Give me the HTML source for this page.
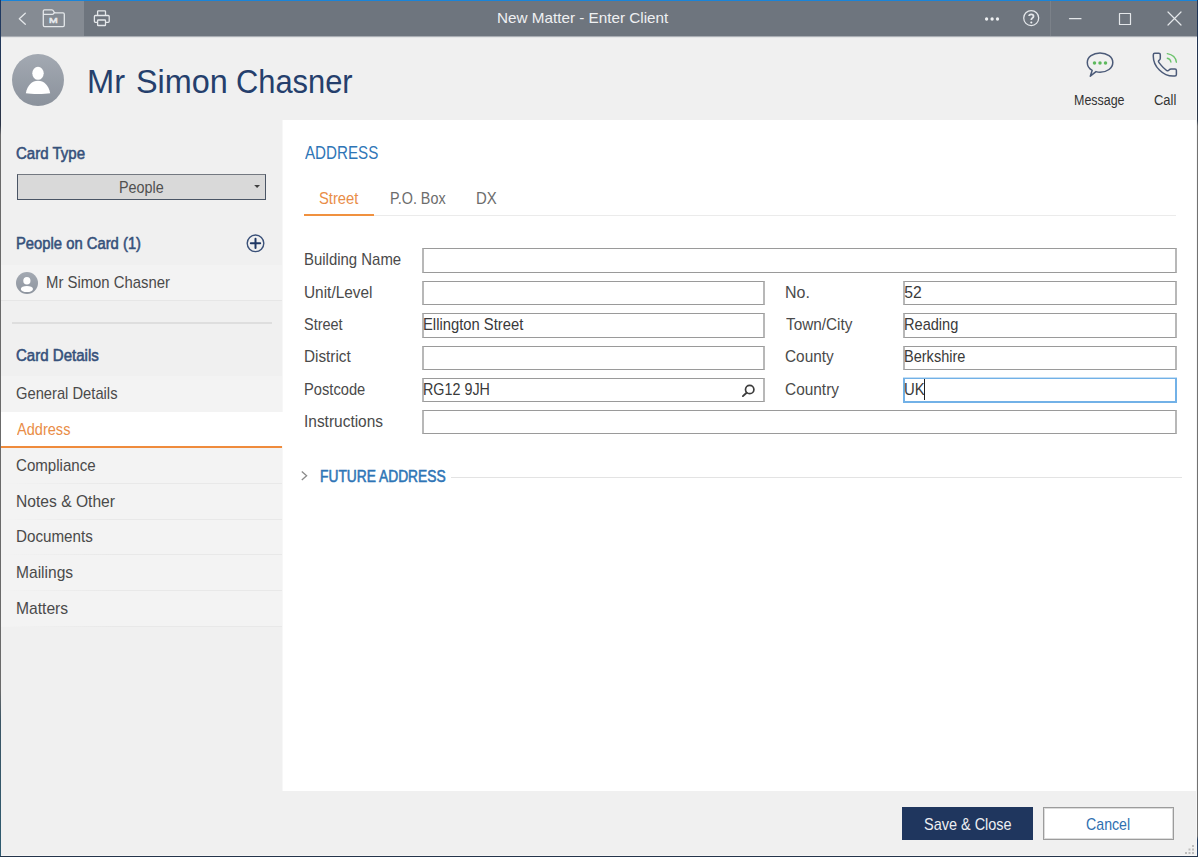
<!DOCTYPE html><html><head><meta charset="utf-8"><style>
html,body{margin:0;padding:0;width:1198px;height:857px;overflow:hidden;background:#f0f0f0}
body{position:relative;font-family:"Liberation Sans",sans-serif}
.t{position:absolute;white-space:nowrap}
.b{position:absolute}
</style></head><body>
<div class="b" style="left:0px;top:0px;width:1198px;height:857px;background:#f0f0f0"></div>
<div class="b" style="left:0px;top:0px;width:1198px;height:36px;background:#6e757e"></div>
<div class="b" style="left:0px;top:1px;width:84px;height:35px;background:#858b93"></div>
<div class="b" style="left:0px;top:36px;width:1198px;height:1px;background:#aaaeb4"></div>
<div class="b" style="left:0px;top:37px;width:1198px;height:1px;background:#e4e5e6"></div>
<div class="b" style="left:0px;top:0px;width:1198px;height:1px;background:#1a84d8"></div>
<div class="b" style="left:1050px;top:1px;width:1px;height:35px;background:#7b8189"></div>
<div class="t" style="left:87.33px;top:65.29px;font-size:33.43px;line-height:33.43px;transform:scaleX(0.9752);transform-origin:0 0;color:#253f6c;font-weight:normal;">Mr</div>
<div class="t" style="left:135.53px;top:65.29px;font-size:33.43px;line-height:33.43px;transform:scaleX(0.9696);transform-origin:0 0;color:#253f6c;font-weight:normal;">Simon</div>
<div class="t" style="left:235.83px;top:65.29px;font-size:33.43px;line-height:33.43px;transform:scaleX(0.9234);transform-origin:0 0;color:#253f6c;font-weight:normal;">Chasner</div>
<svg class="b" style="left:12px;top:54px" width="52" height="52" viewBox="0 0 52 52">
<defs><linearGradient id="ag" x1="0" y1="0" x2="0" y2="1"><stop offset="0" stop-color="#a3a9b2"/><stop offset="1" stop-color="#8b929c"/></linearGradient></defs>
<circle cx="26" cy="26" r="26" fill="url(#ag)"/>
<ellipse cx="26" cy="19.3" rx="5.7" ry="6.5" fill="#fff"/>
<path d="M13.8 39.3 C15.5 31 20 26.8 26 26.8 C32 26.8 36.5 31 38.2 39.3 C33 40.2 19 40.2 13.8 39.3 Z" fill="#fff"/>
</svg>
<div class="t" style="left:496.75px;top:11.22px;font-size:14.97px;line-height:14.97px;transform:scaleX(1.0197);transform-origin:0 0;color:#eef0f2;font-weight:normal;">New Matter - Enter Client</div>
<div class="t" style="left:1074.28px;top:93.04px;font-size:14.24px;line-height:14.24px;transform:scaleX(0.8750);transform-origin:0 0;color:#333333;font-weight:normal;">Message</div>
<div class="t" style="left:1153.64px;top:93.04px;font-size:14.24px;line-height:14.24px;transform:scaleX(0.9098);transform-origin:0 0;color:#333333;font-weight:normal;">Call</div>
<div class="b" style="left:282px;top:120px;width:915px;height:671px;background:#ffffff"></div>
<div class="b" style="left:282px;top:120px;width:1px;height:671px;background:#f7f7f7"></div>
<div class="b" style="left:1197px;top:0px;width:1px;height:857px;background:linear-gradient(180deg,#1d3458 0,#2a3545 120px,#727272 126px,#727272 836px,#1f3a60 840px)"></div>
<div class="b" style="left:0px;top:0px;width:1px;height:857px;background:linear-gradient(180deg,#1e3a64 0,#2b3446 125px,#6a6a6a 135px,#6a6a6a 690px,#3b5565 720px,#2d5a70 857px)"></div>
<div class="b" style="left:0px;top:856px;width:1198px;height:1px;background:#24344a"></div>
<div class="b" style="left:1196px;top:37px;width:1px;height:819px;background:#f6f6f6"></div>
<div class="b" style="left:1px;top:855px;width:1196px;height:1px;background:#f6f6f6"></div>
<svg class="b" style="left:1183px;top:843px" width="14" height="13" viewBox="1183 843 14 13" fill="#bdbdbd">
<rect x="1192" y="845" width="2" height="2"/><rect x="1188.5" y="848.5" width="2" height="2"/><rect x="1192" y="848.5" width="2" height="2"/>
<rect x="1185" y="852" width="2" height="2"/><rect x="1188.5" y="852" width="2" height="2"/><rect x="1192" y="852" width="2" height="2"/></svg>
<svg class="b" style="left:0;top:0" width="1198" height="36" viewBox="0 0 1198 36" fill="none" stroke="#e4e7ea" stroke-width="1.3" stroke-linecap="round" stroke-linejoin="round">
<path d="M25.3 13.3 L19.3 18.8 L25.3 24.3"/>
<path d="M43.3 14.3 V11 Q43.3 9.8 44.5 9.8 H51.8 Q53 9.8 53.8 11.6 Q54.5 12.9 55.8 12.9 H63 Q64.3 12.9 64.3 14.2 V25.3 Q64.3 26.6 63 26.6 H44.6 Q43.3 26.6 43.3 25.3 V14.3 H52.5 Q53.5 14.3 54.2 12.9"/>
<path d="M97.6 15.2 V11.5 Q97.6 10.9 98.2 10.9 H104.9 Q105.5 10.9 105.5 11.5 V15.2"/>
<path d="M97.3 22.3 H95.4 Q94.4 22.3 94.4 21.3 V16.5 Q94.4 15.5 95.4 15.5 H108.2 Q109.2 15.5 109.2 16.5 V21.3 Q109.2 22.3 108.2 22.3 H106"/>
<path d="M97.6 20.6 Q97.6 20 98.2 20 H104.9 Q105.5 20 105.5 20.6 V24.9 Q105.5 25.5 104.9 25.5 H98.2 Q97.6 25.5 97.6 24.9 Z"/>
<circle cx="1031.2" cy="18.1" r="7.5" stroke-width="1.25"/>
<path d="M1029.1 16.1 Q1029.1 14.3 1031.3 14.3 Q1033.5 14.3 1033.5 16.2 Q1033.5 17.3 1032.4 18 Q1031.3 18.7 1031.3 20" stroke-width="1.8" stroke-linecap="butt"/>
<path d="M1069.5 18.7 H1081" stroke-width="1.2"/>
<rect x="1119.5" y="13.5" width="11" height="11" stroke-width="1.2"/>
<path d="M1168 12 L1181 25 M1181 12 L1168 25" stroke-width="1.2"/>
</svg>
<div class="t" style="left:49.44px;top:16.63px;font-size:7.99px;line-height:7.99px;transform:scaleX(1.3089);transform-origin:0 0;color:#e4e7ea;font-weight:normal;-webkit-text-stroke:0.55px #e4e7ea;">M</div>
<svg class="b" style="left:980px;top:14px" width="60" height="10" viewBox="980 14 60 10" fill="#eef0f2">
<circle cx="986.6" cy="19" r="1.65"/><circle cx="992.1" cy="19" r="1.65"/><circle cx="997.5" cy="19" r="1.65"/>
<circle cx="1031.3" cy="22.5" r="1.05"/>
</svg>
<svg class="b" style="left:1080px;top:45px" width="110" height="40" viewBox="1080 45 110 40" fill="none" stroke="#4b5a78" stroke-width="1.5" stroke-linejoin="round" stroke-linecap="round">
<path d="M1092.2 70.3 C1088.7 68.6 1087.3 65.8 1087.3 62.6 C1087.3 57 1093 53 1100 53 C1107 53 1112.8 57 1112.8 62.6 C1112.8 68.2 1107 72.2 1100 72.2 C1098.8 72.2 1097.3 72 1096 71.6 L1090.3 76.2 Z"/>
<g fill="#5cb85c" stroke="none"><circle cx="1094.5" cy="63.1" r="1.75"/><circle cx="1100" cy="63.1" r="1.75"/><circle cx="1105.5" cy="63.1" r="1.75"/></g>
<path d="M1154.8 53.3 H1158.8 Q1160.3 53.3 1160.3 54.8 V58.2 Q1160.3 59.6 1159 60.4 Q1157.9 61.2 1159 62.6 Q1163.5 68.3 1166.5 70.3 Q1168 71.2 1169 70.1 Q1169.8 69 1171.2 69 H1175 Q1176.4 69 1176.4 70.4 V74.6 Q1176.4 76.1 1174.9 76.1 H1173 C1163 76.1 1153.3 66.4 1153.3 56.4 V54.8 Q1153.3 53.3 1154.8 53.3 Z"/>
<g stroke="#6cc36c" stroke-width="1.4"><path d="M1167.3 53.6 Q1175.6 55 1176.4 62.2"/><path d="M1167.3 58.2 Q1170.4 58.8 1170.9 62"/></g>
</svg>
<div class="t" style="left:15.54px;top:146.31px;font-size:15.70px;line-height:15.70px;transform:scaleX(0.9584);transform-origin:0 0;color:#36517b;font-weight:normal;-webkit-text-stroke:0.55px #36517b;">Card Type</div>
<div class="b" style="left:17px;top:174px;width:249px;height:26px;box-sizing:border-box;background:#d9d9d9;border:1px solid #4a5565;border-top-color:#737880"></div>
<div class="t" style="left:119.22px;top:180.31px;font-size:15.70px;line-height:15.70px;transform:scaleX(0.9148);transform-origin:0 0;color:#505050;font-weight:normal;">People</div>
<svg class="b" style="left:250px;top:180px" width="14" height="12"><path d="M4.2 5 H10 L7.1 8.1 Z" fill="#404040"/></svg>
<div class="t" style="left:15.79px;top:236.31px;font-size:15.70px;line-height:15.70px;transform:scaleX(0.9434);transform-origin:0 0;color:#36517b;font-weight:normal;-webkit-text-stroke:0.55px #36517b;">People on Card (1)</div>
<svg class="b" style="left:240px;top:228px" width="30" height="30" viewBox="240 228 30 30" fill="none" stroke="#3a5078" stroke-width="1.4">
<circle cx="255.5" cy="243.3" r="8.3"/>
<path d="M250.8 243.3 H260.2 M255.5 238.7 V248" stroke="#1f3864" stroke-width="2" stroke-linecap="round"/>
</svg>
<div class="b" style="left:1px;top:265px;width:281px;height:35px;background:#f3f3f3"></div>
<div class="b" style="left:1px;top:300px;width:281px;height:1px;background:#e6e6e6"></div>
<svg class="b" style="left:16px;top:272px" width="22" height="22" viewBox="0 0 22 22">
<defs><linearGradient id="ag2" x1="0" y1="0" x2="0" y2="1"><stop offset="0" stop-color="#a3a9b2"/><stop offset="1" stop-color="#8e959f"/></linearGradient></defs><circle cx="11" cy="11" r="11" fill="url(#ag2)"/>
<ellipse cx="10.9" cy="8.7" rx="3.6" ry="3.8" fill="#fff"/>
<ellipse cx="10.9" cy="17" rx="6.1" ry="3.1" fill="#fff"/>
</svg>
<div class="t" style="left:45.68px;top:275.31px;font-size:15.70px;line-height:15.70px;transform:scaleX(0.9481);transform-origin:0 0;color:#4a4a4a;font-weight:normal;">Mr Simon Chasner</div>
<div class="b" style="left:12px;top:322px;width:260px;height:2px;background:#dedede"></div>
<div class="t" style="left:15.74px;top:348.31px;font-size:15.70px;line-height:15.70px;transform:scaleX(0.9588);transform-origin:0 0;color:#36517b;font-weight:normal;-webkit-text-stroke:0.55px #36517b;">Card Details</div>
<div class="b" style="left:1px;top:376px;width:281px;height:36px;background:#f3f3f3"></div>
<div class="t" style="left:16.46px;top:386.31px;font-size:15.70px;line-height:15.70px;transform:scaleX(0.9388);transform-origin:0 0;color:#4a4a4a;font-weight:normal;">General Details</div>
<div class="b" style="left:1px;top:412px;width:282px;height:34px;background:#ffffff"></div>
<div class="b" style="left:1px;top:446px;width:281px;height:2px;background:#ef8b3c"></div>
<div class="t" style="left:17.17px;top:422.31px;font-size:15.70px;line-height:15.70px;transform:scaleX(0.9282);transform-origin:0 0;color:#e98d47;font-weight:normal;">Address</div>
<div class="b" style="left:1px;top:448px;width:281px;height:35px;background:#f3f3f3"></div>
<div class="b" style="left:1px;top:483px;width:281px;height:1px;background:linear-gradient(90deg,#f3f3f3,#e8e8e8 40%,#e8e8e8)"></div>
<div class="t" style="left:16.43px;top:458.31px;font-size:15.70px;line-height:15.70px;transform:scaleX(0.9620);transform-origin:0 0;color:#4a4a4a;font-weight:normal;">Compliance</div>
<div class="b" style="left:1px;top:484px;width:281px;height:35px;background:#f3f3f3"></div>
<div class="b" style="left:1px;top:519px;width:281px;height:1px;background:linear-gradient(90deg,#f3f3f3,#e8e8e8 40%,#e8e8e8)"></div>
<div class="t" style="left:15.92px;top:494.31px;font-size:15.70px;line-height:15.70px;transform:scaleX(0.9958);transform-origin:0 0;color:#4a4a4a;font-weight:normal;">Notes &amp; Other</div>
<div class="b" style="left:1px;top:520px;width:281px;height:35px;background:#f3f3f3"></div>
<div class="b" style="left:1px;top:554px;width:281px;height:1px;background:linear-gradient(90deg,#f3f3f3,#e8e8e8 40%,#e8e8e8)"></div>
<div class="t" style="left:15.95px;top:529.31px;font-size:15.70px;line-height:15.70px;transform:scaleX(0.9685);transform-origin:0 0;color:#4a4a4a;font-weight:normal;">Documents</div>
<div class="b" style="left:1px;top:555px;width:281px;height:35px;background:#f3f3f3"></div>
<div class="b" style="left:1px;top:590px;width:281px;height:1px;background:linear-gradient(90deg,#f3f3f3,#e8e8e8 40%,#e8e8e8)"></div>
<div class="t" style="left:15.92px;top:565.31px;font-size:15.70px;line-height:15.70px;transform:scaleX(0.9924);transform-origin:0 0;color:#4a4a4a;font-weight:normal;">Mailings</div>
<div class="b" style="left:1px;top:591px;width:281px;height:35px;background:#f3f3f3"></div>
<div class="b" style="left:1px;top:626px;width:281px;height:1px;background:linear-gradient(90deg,#f3f3f3,#e8e8e8 40%,#e8e8e8)"></div>
<div class="t" style="left:15.92px;top:601.31px;font-size:15.70px;line-height:15.70px;transform:scaleX(0.9964);transform-origin:0 0;color:#4a4a4a;font-weight:normal;">Matters</div>
<div class="t" style="left:304.57px;top:144.83px;font-size:17.44px;line-height:17.44px;transform:scaleX(0.8696);transform-origin:0 0;color:#2e75b6;font-weight:normal;">ADDRESS</div>
<div class="t" style="left:319.23px;top:191.31px;font-size:15.70px;line-height:15.70px;transform:scaleX(0.9402);transform-origin:0 0;color:#e98d47;font-weight:normal;">Street</div>
<div class="t" style="left:389.72px;top:191.31px;font-size:15.70px;line-height:15.70px;transform:scaleX(0.9151);transform-origin:0 0;color:#6c6c6c;font-weight:normal;">P.O. Box</div>
<div class="t" style="left:475.58px;top:191.31px;font-size:15.70px;line-height:15.70px;transform:scaleX(0.9510);transform-origin:0 0;color:#6c6c6c;font-weight:normal;">DX</div>
<div class="b" style="left:304px;top:215px;width:872px;height:1px;background:#ebebeb"></div>
<div class="b" style="left:304px;top:214px;width:70px;height:2px;background:#f0913f"></div>
<div class="t" style="left:303.77px;top:252.31px;font-size:15.70px;line-height:15.70px;transform:scaleX(0.9520);transform-origin:0 0;color:#4a4a4a;font-weight:normal;">Building Name</div>
<div class="b" style="left:422px;top:248px;width:755px;height:25px;box-sizing:border-box;background:#fff;border-style:solid;border-color:#9a9a9a #b8b8b8;border-width:1px 2px;"></div>
<div class="t" style="left:303.81px;top:285.31px;font-size:15.70px;line-height:15.70px;transform:scaleX(0.9816);transform-origin:0 0;color:#4a4a4a;font-weight:normal;">Unit/Level</div>
<div class="b" style="left:422px;top:281px;width:343px;height:24px;box-sizing:border-box;background:#fff;border-style:solid;border-color:#9a9a9a #b8b8b8;border-width:1px 2px;"></div>
<div class="t" style="left:304.34px;top:317.31px;font-size:15.70px;line-height:15.70px;transform:scaleX(0.9232);transform-origin:0 0;color:#4a4a4a;font-weight:normal;">Street</div>
<div class="b" style="left:422px;top:313px;width:343px;height:25px;box-sizing:border-box;background:#fff;border-style:solid;border-color:#9a9a9a #b8b8b8;border-width:1px 2px;"></div>
<div class="t" style="left:303.74px;top:349.31px;font-size:15.70px;line-height:15.70px;transform:scaleX(0.9751);transform-origin:0 0;color:#4a4a4a;font-weight:normal;">District</div>
<div class="b" style="left:422px;top:346px;width:343px;height:24px;box-sizing:border-box;background:#fff;border-style:solid;border-color:#9a9a9a #b8b8b8;border-width:1px 2px;"></div>
<div class="t" style="left:303.79px;top:382.31px;font-size:15.70px;line-height:15.70px;transform:scaleX(0.9359);transform-origin:0 0;color:#4a4a4a;font-weight:normal;">Postcode</div>
<div class="b" style="left:422px;top:378px;width:343px;height:24px;box-sizing:border-box;background:#fff;border-style:solid;border-color:#9a9a9a #b8b8b8;border-width:1px 2px;"></div>
<div class="t" style="left:303.57px;top:414.31px;font-size:15.70px;line-height:15.70px;transform:scaleX(0.9853);transform-origin:0 0;color:#4a4a4a;font-weight:normal;">Instructions</div>
<div class="b" style="left:422px;top:410px;width:755px;height:24px;box-sizing:border-box;background:#fff;border-style:solid;border-color:#9a9a9a #b8b8b8;border-width:1px 2px;"></div>
<div class="t" style="left:784.69px;top:285.31px;font-size:15.70px;line-height:15.70px;transform:scaleX(1.0181);transform-origin:0 0;color:#4a4a4a;font-weight:normal;">No.</div>
<div class="b" style="left:903px;top:281px;width:274px;height:24px;box-sizing:border-box;background:#fff;border-style:solid;border-color:#9a9a9a #b8b8b8;border-width:1px 2px;"></div>
<div class="t" style="left:904.37px;top:285.31px;font-size:15.70px;line-height:15.70px;color:#3a3a3a;font-weight:normal;">52</div>
<div class="t" style="left:785.66px;top:317.31px;font-size:15.70px;line-height:15.70px;transform:scaleX(0.9770);transform-origin:0 0;color:#4a4a4a;font-weight:normal;">Town/City</div>
<div class="b" style="left:903px;top:313px;width:274px;height:25px;box-sizing:border-box;background:#fff;border-style:solid;border-color:#9a9a9a #b8b8b8;border-width:1px 2px;"></div>
<div class="t" style="left:903.80px;top:317.31px;font-size:15.70px;line-height:15.70px;transform:scaleX(0.9292);transform-origin:0 0;color:#3a3a3a;font-weight:normal;">Reading</div>
<div class="t" style="left:785.22px;top:349.31px;font-size:15.70px;line-height:15.70px;transform:scaleX(0.9793);transform-origin:0 0;color:#4a4a4a;font-weight:normal;">County</div>
<div class="b" style="left:903px;top:346px;width:274px;height:24px;box-sizing:border-box;background:#fff;border-style:solid;border-color:#9a9a9a #b8b8b8;border-width:1px 2px;"></div>
<div class="t" style="left:903.81px;top:349.31px;font-size:15.70px;line-height:15.70px;transform:scaleX(0.9266);transform-origin:0 0;color:#3a3a3a;font-weight:normal;">Berkshire</div>
<div class="t" style="left:785.22px;top:382.31px;font-size:15.70px;line-height:15.70px;transform:scaleX(0.9827);transform-origin:0 0;color:#4a4a4a;font-weight:normal;">Country</div>
<div class="b" style="left:903px;top:378px;width:274px;height:25px;box-sizing:border-box;background:#fff;border:2px solid #72b1e7;border-top-width:1px;box-shadow:0 -1px 0 #c4dff5"></div>
<div class="t" style="left:903.85px;top:382.31px;font-size:15.70px;line-height:15.70px;transform:scaleX(0.9501);transform-origin:0 0;color:#3a3a3a;font-weight:normal;">UK</div>
<div class="t" style="left:423.29px;top:317.31px;font-size:15.70px;line-height:15.70px;transform:scaleX(0.9423);transform-origin:0 0;color:#3a3a3a;font-weight:normal;">Ellington Street</div>
<div class="t" style="left:422.82px;top:382.31px;font-size:15.70px;line-height:15.70px;transform:scaleX(0.9135);transform-origin:0 0;color:#3a3a3a;font-weight:normal;">RG12 9JH</div>
<div class="b" style="left:924px;top:379px;width:1px;height:21px;background:#202020"></div>
<svg class="b" style="left:738px;top:380px" width="20" height="20" viewBox="738 380 20 20" fill="none" stroke="#3c3c3c" stroke-width="1.5" stroke-linecap="round">
<circle cx="749.7" cy="389.5" r="4.2" stroke-width="1.7"/><path d="M746.6 392.7 L742.9 396.1" stroke-width="1.9"/></svg>
<svg class="b" style="left:298px;top:468px" width="14" height="16" viewBox="298 468 14 16" fill="none" stroke="#8a8a8a" stroke-width="1.3"><path d="M301.8 471.6 L306.6 475.8 L301.8 480"/></svg>
<div class="t" style="left:320.37px;top:469.31px;font-size:15.70px;line-height:15.70px;transform:scaleX(0.8792);transform-origin:0 0;color:#2e75b6;font-weight:normal;-webkit-text-stroke:0.55px #2e75b6;">FUTURE ADDRESS</div>
<div class="b" style="left:451px;top:477px;width:731px;height:1px;background:#e3e3e3"></div>
<div class="b" style="left:902px;top:807px;width:131px;height:33px;background:#1f365e"></div>
<div class="t" style="left:923.74px;top:817.31px;font-size:15.70px;line-height:15.70px;transform:scaleX(0.9221);transform-origin:0 0;color:#eceef2;font-weight:normal;">Save &amp; Close</div>
<div class="b" style="left:1043px;top:807px;width:131px;height:33px;box-sizing:border-box;border:1px solid #9c9c9c;background:#fff;box-shadow:inset 0 0 0 1px #dcdcdc"></div>
<div class="t" style="left:1086.28px;top:817.31px;font-size:15.70px;line-height:15.70px;transform:scaleX(0.9039);transform-origin:0 0;color:#2f6fb0;font-weight:normal;">Cancel</div>
</body></html>
